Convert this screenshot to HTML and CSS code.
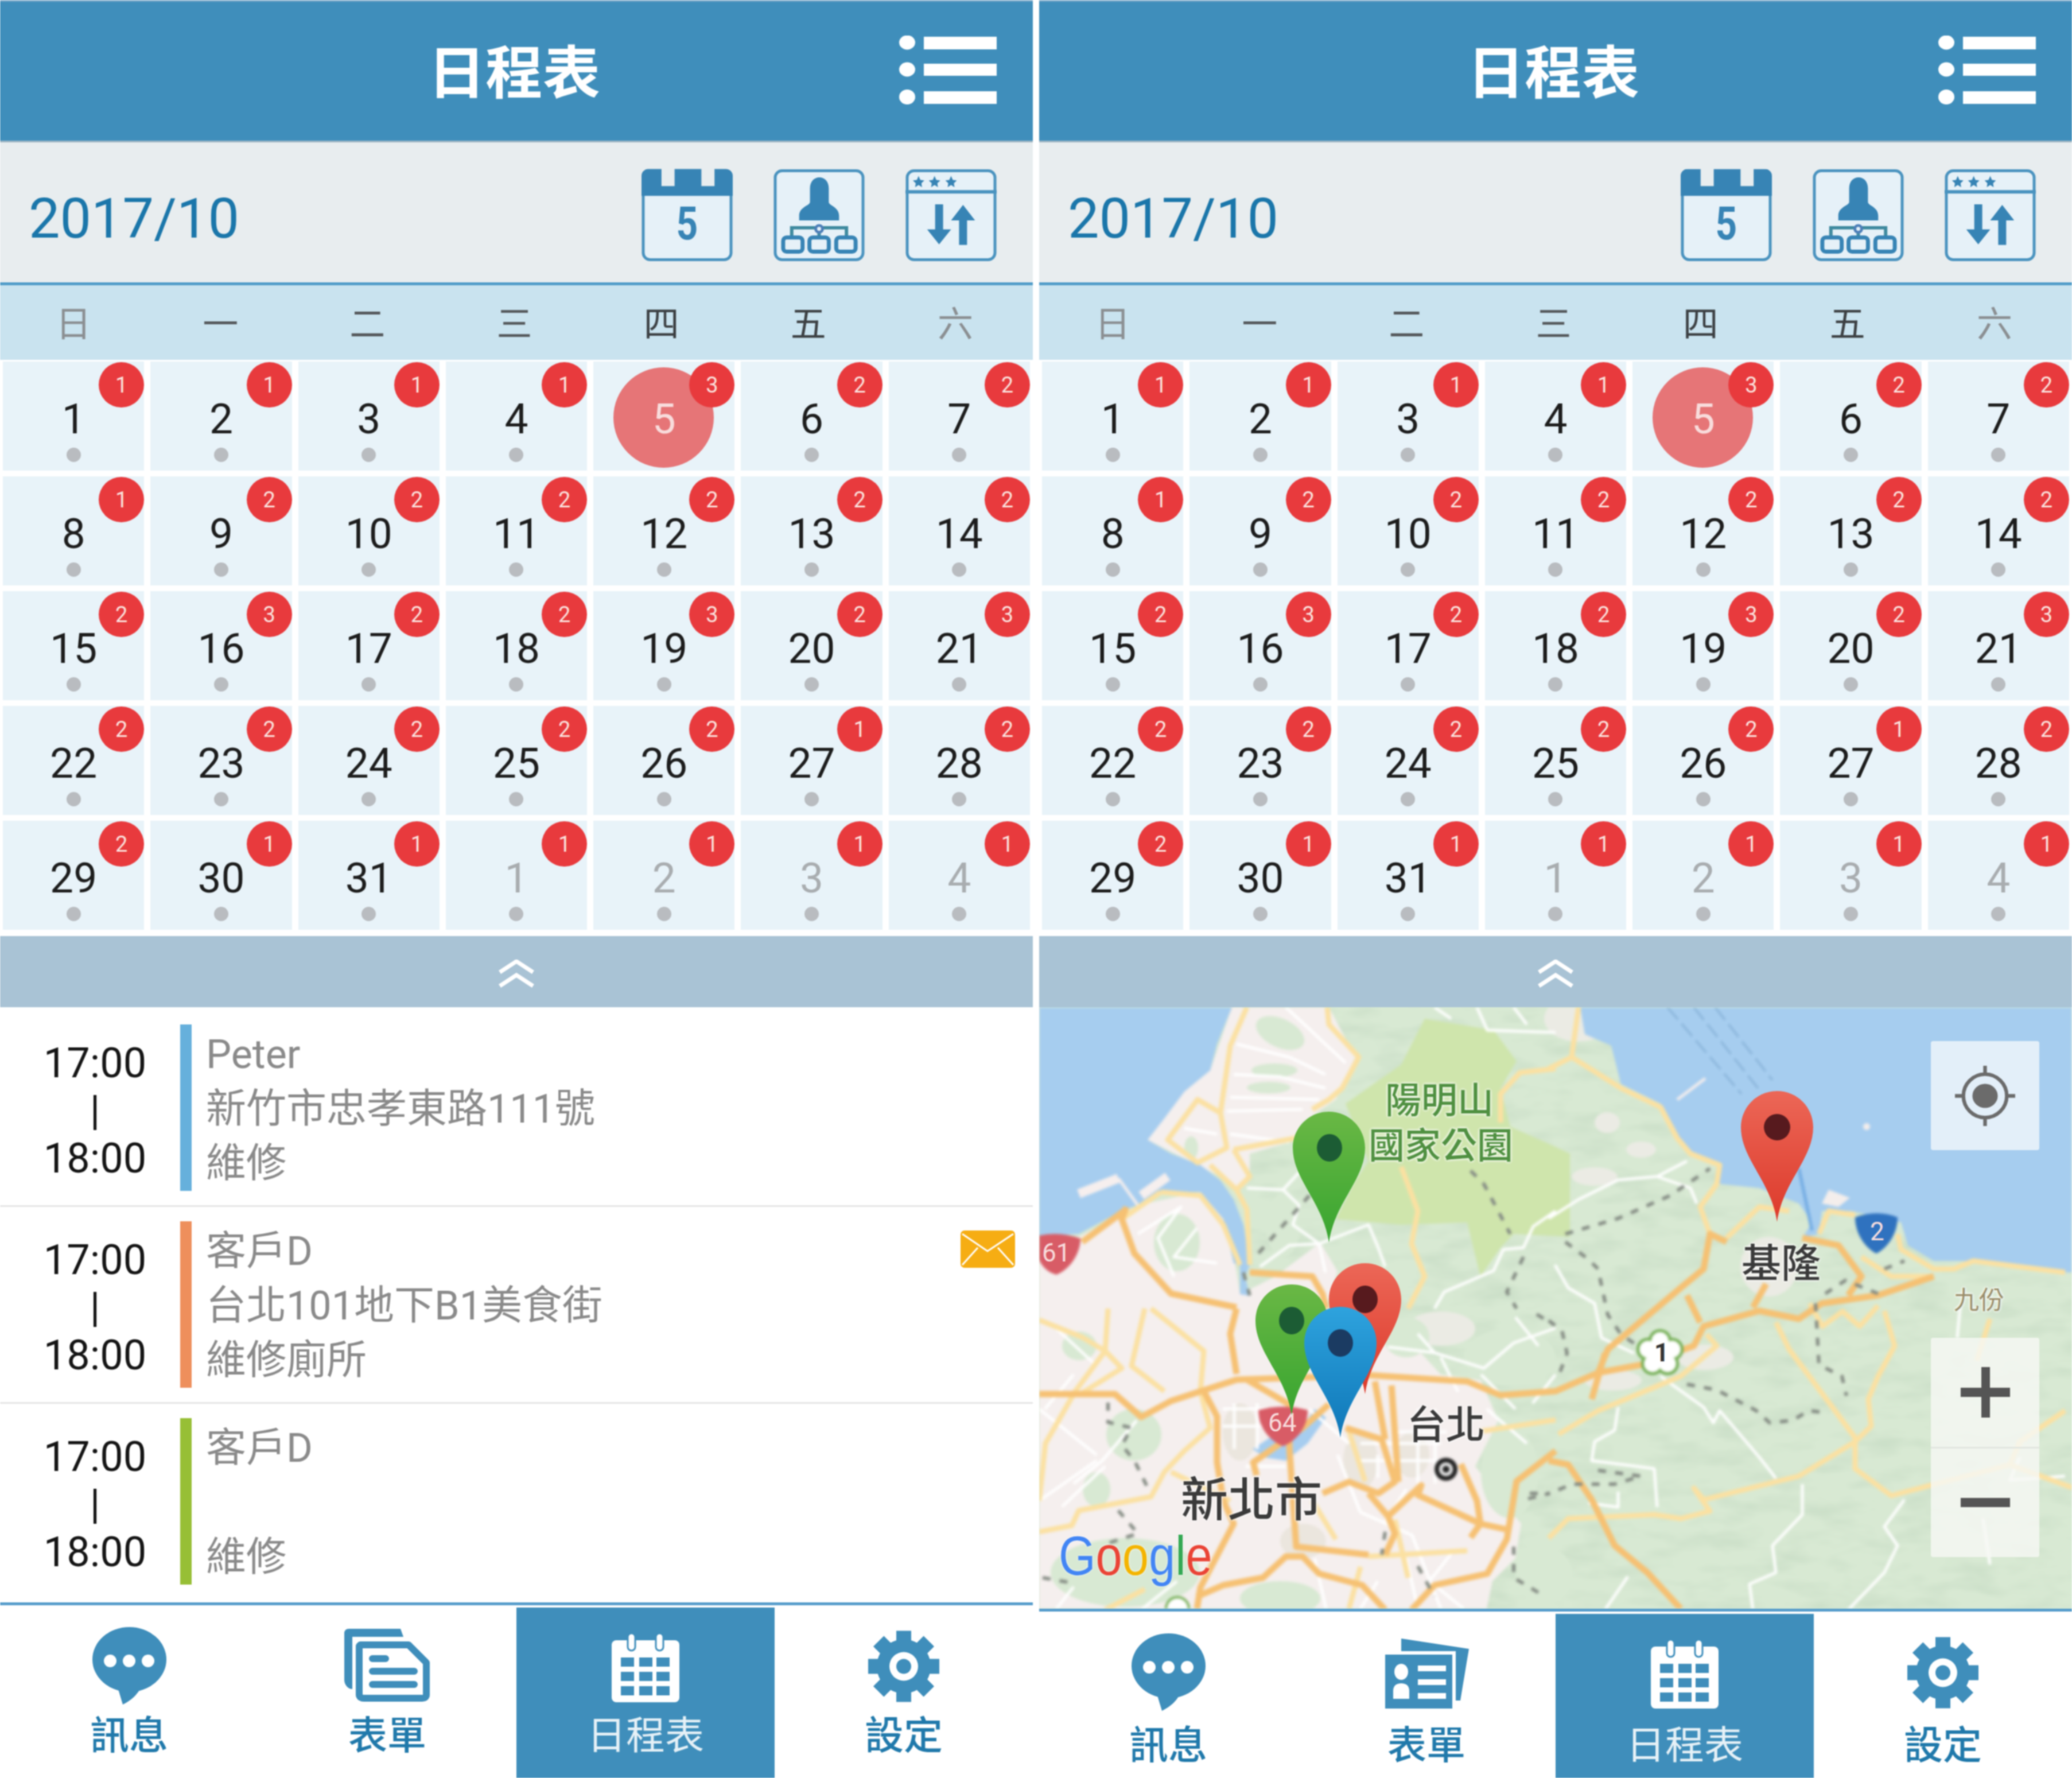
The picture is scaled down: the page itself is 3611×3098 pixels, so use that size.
FILE: index.html
```html
<!DOCTYPE html>
<html lang="zh-Hant">
<head>
    <meta charset="UTF-8">
    <title>日程表</title>
    <link rel="stylesheet" href="styles.css">
</head>
<body>
    <!-- shared icons -->
    <svg class="defs">
        <symbol id="ico-menu" viewBox="0 0 170 120">
            <ellipse cx="14" cy="12" rx="14" ry="12.5" fill="#fff"/><ellipse cx="14" cy="59" rx="14" ry="12.5" fill="#fff"/><ellipse cx="14" cy="107" rx="14" ry="13" fill="#fff"/>
            <rect x="43" y="2" width="127" height="22" fill="#fff"/><rect x="43" y="49" width="127" height="21" fill="#fff"/><rect x="43" y="97" width="127" height="22" fill="#fff"/>
        </symbol>
        <symbol id="ico-day" viewBox="0 0 160 162">
            <path d="M3 40V147a12 12 0 0 0 12 12H145a12 12 0 0 0 12-12V40z" fill="#e6f1f8" stroke="#4a93bf" stroke-width="5"/>
            <path d="M12 0h23v30h23V0h47v30h23V0h20a12 12 0 0 1 12 12v35H0V12A12 12 0 0 1 12 0z" fill="#3784b5"/>
            <text x="80" y="123" class="ico-five" textLength="38" lengthAdjust="spacingAndGlyphs">5</text>
        </symbol>
        <symbol id="ico-org" viewBox="0 0 160 162">
            <rect x="3" y="3" width="154" height="156" rx="12" fill="#e6f1f8" stroke="#4a93bf" stroke-width="5"/>
            <path d="M64 34C64 8 97 8 97 34V58C97 64 115 66 115 82V90H45V82C45 66 64 64 64 58z" fill="#3784b5"/>
            <path d="M32 118V103H128V118M80 103V118" fill="none" stroke="#3f8a9f" stroke-width="6"/>
            <circle cx="80" cy="105" r="6" fill="#e6f1f8" stroke="#4d7fb8" stroke-width="5"/>
            <rect x="17" y="120" width="34" height="25" rx="6" fill="#e6f1f8" stroke="#3784b5" stroke-width="7"/>
            <rect x="63" y="120" width="34" height="25" rx="6" fill="#e6f1f8" stroke="#3784b5" stroke-width="7"/>
            <rect x="110" y="120" width="34" height="25" rx="6" fill="#e6f1f8" stroke="#3784b5" stroke-width="7"/>
        </symbol>
        <symbol id="ico-sort" viewBox="0 0 160 162">
            <rect x="3" y="3" width="154" height="156" rx="12" fill="#e6f1f8" stroke="#4a93bf" stroke-width="5"/>
            <path d="M0 40H160" stroke="#4a93bf" stroke-width="6"/>
            <path d="M23 12l3 7 7 1-5 5 1 7-6-4-6 4 1-7-5-5 7-1z" fill="#3784b5"/>
            <path d="M51 12l3 7 7 1-5 5 1 7-6-4-6 4 1-7-5-5 7-1z" fill="#3784b5"/>
            <path d="M80 12l3 7 7 1-5 5 1 7-6-4-6 4 1-7-5-5 7-1z" fill="#3784b5"/>
            <path d="M52 62H66V106H80L59 132 38 106H52z" fill="#3784b5"/>
            <path d="M94 133H108V90H122L101 63 80 90H94z" fill="#3784b5"/>
        </symbol>
        <symbol id="ico-up" viewBox="0 0 62 50">
            <path d="M2 22L31 3 60 22M2 46L31 27 60 46" fill="none" stroke="#fff" stroke-width="7"/>
        </symbol>
        <symbol id="ico-chat" viewBox="0 0 150 140">
            <ellipse cx="75.5" cy="56.5" rx="64.5" ry="56.5" fill="#3f8ebb"/>
            <path d="M55 105L64 135C78 128 90 118 96 104z" fill="#3f8ebb"/>
            <circle cx="42" cy="59" r="11" fill="#fff"/><circle cx="75" cy="59" r="11" fill="#fff"/><circle cx="108" cy="59" r="11" fill="#fff"/>
        </symbol>
        <symbol id="ico-form" viewBox="0 0 150 140">
            <path d="M8 3H98L103 17H14V108C6 108 0 100 0 92V11C0 6 3 3 8 3z" fill="#3f8ebb"/>
            <path d="M28 31H112L143 62V118C143 122 140 124 136 124H34C30 124 26 122 26 118V33z" fill="#fff" stroke="#3f8ebb" stroke-width="12" stroke-linejoin="round"/>
            <path d="M49 55H72M49 77H122M49 100H122" fill="none" stroke="#3f8ebb" stroke-width="12" stroke-linecap="round"/>
        </symbol>
        <symbol id="ico-card" viewBox="0 0 150 140">
            <path d="M31 9L149 27 134 117H31z" fill="#3f8ebb"/>
            <rect x="0" y="34" width="123" height="100" fill="#3f8ebb" stroke="#fff" stroke-width="6"/>
            <ellipse cx="31" cy="67" rx="12" ry="14" fill="#fff"/>
            <path d="M17 114V100C17 90 24 87 31 87S45 90 45 100V114z" fill="#fff"/>
            <path d="M60 61H109M60 85H109M60 109H109" stroke="#fff" stroke-width="10"/>
        </symbol>
        <symbol id="ico-cal" viewBox="0 0 150 140">
            <rect x="16" y="23" width="118" height="108" rx="8" fill="#fff"/>
            <rect x="44" y="11" width="13" height="30" rx="6.5" fill="#fff" stroke="#3f8ebb" stroke-width="3"/>
            <rect x="93" y="11" width="13" height="30" rx="6.5" fill="#fff" stroke="#3f8ebb" stroke-width="3"/>
            <path d="M32 53h23v16H32zM64 53h23v16H64zM94 53h23v16H94zM32 78h23v16H32zM64 78h23v16H64zM94 78h23v16H94zM32 103h23v16H32zM64 103h23v16H64zM94 103h23v16H94z" fill="#3f8ebb"/>
        </symbol>
        <symbol id="ico-gear" viewBox="0 0 150 140">
            <g fill="#3f8ebb" transform="translate(75 68.5)">
                <circle r="47"/>
                <rect x="-13" y="-62" width="26" height="24"/><rect x="-13" y="38" width="26" height="24"/>
                <rect x="-62" y="-13" width="24" height="26"/><rect x="38" y="-13" width="24" height="26"/>
                <rect x="-13" y="-62" width="26" height="24" transform="rotate(45)"/><rect x="-13" y="38" width="26" height="24" transform="rotate(45)"/>
                <rect x="-62" y="-13" width="24" height="26" transform="rotate(45)"/><rect x="38" y="-13" width="24" height="26" transform="rotate(45)"/>
                <circle r="25" fill="#fff"/><circle r="13"/>
            </g>
        </symbol>
        <symbol id="ico-mail" viewBox="0 0 95 65">
            <rect width="95" height="65" rx="7" fill="#f6ad13"/>
            <path d="M3 6L47 36 92 6M3 60L30 30M92 60L65 30" fill="none" stroke="#fff" stroke-width="3"/>
        </symbol>
    </svg>

    <main class="screens">
        <!-- left: event list -->
        <section class="phone">
            <header class="topbar">
                <span></span>
                <h1 class="title">日程表</h1>
                <svg class="menu"><use href="#ico-menu"/></svg>
            </header>
            <div class="monthbar">
                <span class="month">2017/10</span>
                <div class="tools">
                    <svg class="tool"><use href="#ico-day"/></svg>
                    <svg class="tool"><use href="#ico-org"/></svg>
                    <svg class="tool"><use href="#ico-sort"/></svg>
                </div>
            </div>
            <div class="weekdays">
                <span class="wd-end">日</span><span>一</span><span>二</span><span>三</span><span class="wd-mid">四</span><span class="wd-mid">五</span><span class="wd-end">六</span>
            </div>
            <div class="days">
                <div class="day"><b class="badge">1</b><span class="num">1</span><i class="dot"></i></div>
                <div class="day"><b class="badge">1</b><span class="num">2</span><i class="dot"></i></div>
                <div class="day"><b class="badge">1</b><span class="num">3</span><i class="dot"></i></div>
                <div class="day"><b class="badge">1</b><span class="num">4</span><i class="dot"></i></div>
                <div class="day today"><b class="badge">3</b><span class="num">5</span><i class="dot"></i></div>
                <div class="day"><b class="badge">2</b><span class="num">6</span><i class="dot"></i></div>
                <div class="day"><b class="badge">2</b><span class="num">7</span><i class="dot"></i></div>
                <div class="day"><b class="badge">1</b><span class="num">8</span><i class="dot"></i></div>
                <div class="day"><b class="badge">2</b><span class="num">9</span><i class="dot"></i></div>
                <div class="day"><b class="badge">2</b><span class="num">10</span><i class="dot"></i></div>
                <div class="day"><b class="badge">2</b><span class="num">11</span><i class="dot"></i></div>
                <div class="day"><b class="badge">2</b><span class="num">12</span><i class="dot"></i></div>
                <div class="day"><b class="badge">2</b><span class="num">13</span><i class="dot"></i></div>
                <div class="day"><b class="badge">2</b><span class="num">14</span><i class="dot"></i></div>
                <div class="day"><b class="badge">2</b><span class="num">15</span><i class="dot"></i></div>
                <div class="day"><b class="badge">3</b><span class="num">16</span><i class="dot"></i></div>
                <div class="day"><b class="badge">2</b><span class="num">17</span><i class="dot"></i></div>
                <div class="day"><b class="badge">2</b><span class="num">18</span><i class="dot"></i></div>
                <div class="day"><b class="badge">3</b><span class="num">19</span><i class="dot"></i></div>
                <div class="day"><b class="badge">2</b><span class="num">20</span><i class="dot"></i></div>
                <div class="day"><b class="badge">3</b><span class="num">21</span><i class="dot"></i></div>
                <div class="day"><b class="badge">2</b><span class="num">22</span><i class="dot"></i></div>
                <div class="day"><b class="badge">2</b><span class="num">23</span><i class="dot"></i></div>
                <div class="day"><b class="badge">2</b><span class="num">24</span><i class="dot"></i></div>
                <div class="day"><b class="badge">2</b><span class="num">25</span><i class="dot"></i></div>
                <div class="day"><b class="badge">2</b><span class="num">26</span><i class="dot"></i></div>
                <div class="day"><b class="badge">1</b><span class="num">27</span><i class="dot"></i></div>
                <div class="day"><b class="badge">2</b><span class="num">28</span><i class="dot"></i></div>
                <div class="day"><b class="badge">2</b><span class="num">29</span><i class="dot"></i></div>
                <div class="day"><b class="badge">1</b><span class="num">30</span><i class="dot"></i></div>
                <div class="day"><b class="badge">1</b><span class="num">31</span><i class="dot"></i></div>
                <div class="day other"><b class="badge">1</b><span class="num">1</span><i class="dot"></i></div>
                <div class="day other"><b class="badge">1</b><span class="num">2</span><i class="dot"></i></div>
                <div class="day other"><b class="badge">1</b><span class="num">3</span><i class="dot"></i></div>
                <div class="day other"><b class="badge">1</b><span class="num">4</span><i class="dot"></i></div>
            </div>
            <div class="collapse"><svg class="collapse-ico"><use href="#ico-up"/></svg></div>
            <div class="events">
                <article class="event">
                    <div class="time">17:00<br>|<br>18:00</div>
                    <i class="stripe stripe-blue"></i>
                    <div class="info">Peter<br>新竹市忠孝東路111號<br>維修</div>
                </article>
                <article class="event">
                    <div class="time">17:00<br>|<br>18:00</div>
                    <i class="stripe stripe-orange"></i>
                    <div class="info">客戶D<br>台北101地下B1美食街<br>維修廁所</div>
                    <svg class="mail"><use href="#ico-mail"/></svg>
                </article>
                <article class="event last">
                    <div class="time">17:00<br>|<br>18:00</div>
                    <i class="stripe stripe-green"></i>
                    <div class="info">客戶D<br>&nbsp;<br>維修</div>
                </article>
            </div>
            <nav class="tabs">
                <a class="tab"><svg class="tab-ico"><use href="#ico-chat"/></svg>訊息</a>
                <a class="tab"><svg class="tab-ico"><use href="#ico-form"/></svg>表單</a>
                <a class="tab active"><svg class="tab-ico"><use href="#ico-cal"/></svg>日程表</a>
                <a class="tab"><svg class="tab-ico"><use href="#ico-gear"/></svg>設定</a>
            </nav>
        </section>

        <!-- right: map -->
        <section class="phone">
            <header class="topbar">
                <span></span>
                <h1 class="title">日程表</h1>
                <svg class="menu"><use href="#ico-menu"/></svg>
            </header>
            <div class="monthbar">
                <span class="month">2017/10</span>
                <div class="tools">
                    <svg class="tool"><use href="#ico-day"/></svg>
                    <svg class="tool"><use href="#ico-org"/></svg>
                    <svg class="tool"><use href="#ico-sort"/></svg>
                </div>
            </div>
            <div class="weekdays">
                <span class="wd-end">日</span><span>一</span><span>二</span><span>三</span><span class="wd-mid">四</span><span class="wd-mid">五</span><span class="wd-end">六</span>
            </div>
            <div class="days">
                <div class="day"><b class="badge">1</b><span class="num">1</span><i class="dot"></i></div>
                <div class="day"><b class="badge">1</b><span class="num">2</span><i class="dot"></i></div>
                <div class="day"><b class="badge">1</b><span class="num">3</span><i class="dot"></i></div>
                <div class="day"><b class="badge">1</b><span class="num">4</span><i class="dot"></i></div>
                <div class="day today"><b class="badge">3</b><span class="num">5</span><i class="dot"></i></div>
                <div class="day"><b class="badge">2</b><span class="num">6</span><i class="dot"></i></div>
                <div class="day"><b class="badge">2</b><span class="num">7</span><i class="dot"></i></div>
                <div class="day"><b class="badge">1</b><span class="num">8</span><i class="dot"></i></div>
                <div class="day"><b class="badge">2</b><span class="num">9</span><i class="dot"></i></div>
                <div class="day"><b class="badge">2</b><span class="num">10</span><i class="dot"></i></div>
                <div class="day"><b class="badge">2</b><span class="num">11</span><i class="dot"></i></div>
                <div class="day"><b class="badge">2</b><span class="num">12</span><i class="dot"></i></div>
                <div class="day"><b class="badge">2</b><span class="num">13</span><i class="dot"></i></div>
                <div class="day"><b class="badge">2</b><span class="num">14</span><i class="dot"></i></div>
                <div class="day"><b class="badge">2</b><span class="num">15</span><i class="dot"></i></div>
                <div class="day"><b class="badge">3</b><span class="num">16</span><i class="dot"></i></div>
                <div class="day"><b class="badge">2</b><span class="num">17</span><i class="dot"></i></div>
                <div class="day"><b class="badge">2</b><span class="num">18</span><i class="dot"></i></div>
                <div class="day"><b class="badge">3</b><span class="num">19</span><i class="dot"></i></div>
                <div class="day"><b class="badge">2</b><span class="num">20</span><i class="dot"></i></div>
                <div class="day"><b class="badge">3</b><span class="num">21</span><i class="dot"></i></div>
                <div class="day"><b class="badge">2</b><span class="num">22</span><i class="dot"></i></div>
                <div class="day"><b class="badge">2</b><span class="num">23</span><i class="dot"></i></div>
                <div class="day"><b class="badge">2</b><span class="num">24</span><i class="dot"></i></div>
                <div class="day"><b class="badge">2</b><span class="num">25</span><i class="dot"></i></div>
                <div class="day"><b class="badge">2</b><span class="num">26</span><i class="dot"></i></div>
                <div class="day"><b class="badge">1</b><span class="num">27</span><i class="dot"></i></div>
                <div class="day"><b class="badge">2</b><span class="num">28</span><i class="dot"></i></div>
                <div class="day"><b class="badge">2</b><span class="num">29</span><i class="dot"></i></div>
                <div class="day"><b class="badge">1</b><span class="num">30</span><i class="dot"></i></div>
                <div class="day"><b class="badge">1</b><span class="num">31</span><i class="dot"></i></div>
                <div class="day other"><b class="badge">1</b><span class="num">1</span><i class="dot"></i></div>
                <div class="day other"><b class="badge">1</b><span class="num">2</span><i class="dot"></i></div>
                <div class="day other"><b class="badge">1</b><span class="num">3</span><i class="dot"></i></div>
                <div class="day other"><b class="badge">1</b><span class="num">4</span><i class="dot"></i></div>
            </div>
            <div class="collapse"><svg class="collapse-ico"><use href="#ico-up"/></svg></div>
            <div class="map">
                <svg class="map-base" viewBox="0 0 1800 1048">
                    <defs>
                        <filter id="terrain" x="0" y="0" width="100%" height="100%">
                            <feTurbulence type="fractalNoise" baseFrequency="0.012 0.035" numOctaves="3" seed="7"/>
                            <feColorMatrix values="0 0 0 0 0.6  0 0 0 0 0.74  0 0 0 0 0.58  0 0 0 2.2 -0.95"/>
                        </filter>
                    </defs>
                    <rect width="1800" height="1048" fill="#d8e9d3"/>
                    <rect width="1800" height="1048" filter="url(#terrain)"/>
                    <!-- pale patches in the hills -->
                    <g fill="#ebebe4">
                        <ellipse cx="1049" cy="248" rx="26" ry="14"/><ellipse cx="968" cy="295" rx="40" ry="16"/><ellipse cx="990" cy="201" rx="22" ry="18"/>
                        <ellipse cx="940" cy="20" rx="60" ry="40"/><ellipse cx="1272" cy="452" rx="50" ry="52"/><ellipse cx="1160" cy="610" rx="50" ry="22"/>
                        <ellipse cx="700" cy="560" rx="60" ry="30"/><ellipse cx="1000" cy="650" rx="50" ry="18"/>
                    </g>
                    <!-- park -->
                    <path d="M672 20L792 40 832 94 804 141 821 208 895 241 925 255 925 400 827 395 804 419 769 469 746 375 631 379 517 369 551 302 574 268 534 168 631 100z" fill="#cfe5ac"/>
                    <!-- town areas -->
                    <g fill="#f5efee">
                        <path d="M336 0L505 0 551 87 517 161 459 201 442 234 367 255 367 302 350 318 316 295 189 231 253 147 298 110z"/>
                        <path d="M0 400L70 400 172 345 280 322 330 370 350 500 410 470 490 410 520 460 500 525 560 540 640 575 700 640 770 650 800 720 760 800 840 900 830 960 790 1000 780 1048H0z"/>
                    </g>
                    <g fill="#d8e9d3">
                        <ellipse cx="420" cy="45" rx="45" ry="25" transform="rotate(25 420 45)"/><ellipse cx="410" cy="110" rx="40" ry="12"/><ellipse cx="400" cy="140" rx="38" ry="10"/>
                        <ellipse cx="265" cy="245" rx="12" ry="20"/><ellipse cx="240" cy="410" rx="40" ry="50"/><ellipse cx="425" cy="380" rx="30" ry="55"/>
                        <ellipse cx="165" cy="745" rx="48" ry="45"/><ellipse cx="100" cy="840" rx="24" ry="30"/><ellipse cx="150" cy="985" rx="130" ry="60"/>
                        <ellipse cx="640" cy="575" rx="40" ry="35"/><ellipse cx="820" cy="610" rx="80" ry="50"/><ellipse cx="820" cy="810" rx="50" ry="80"/>
                        <ellipse cx="420" cy="1030" rx="70" ry="30"/><ellipse cx="880" cy="990" rx="50" ry="50"/><ellipse cx="70" cy="590" rx="30" ry="25"/>
                    </g>
                    <g fill="#ebe6de">
                        <ellipse cx="350" cy="740" rx="30" ry="50"/><ellipse cx="560" cy="790" rx="30" ry="50"/><ellipse cx="460" cy="930" rx="40" ry="30"/><ellipse cx="650" cy="780" rx="30" ry="40"/>
                    </g>
                    <!-- water -->
                    <g fill="#a6cdef">
                        <path d="M943 0L951 47 997 67 1014 134 1083 168 1112 221 1129 248 1186 275 1186 308 1255 315 1324 342 1347 375 1330 402 1359 395 1364 355 1416 355 1502 375 1514 415 1559 442 1628 442 1788 462 1800 462V0z"/>
                        <path d="M0 0H336L310 64 298 110 253 147 218 194 189 231 230 255 281 275 316 302 339 335 356 379 367 449 359 469 367 503 350 500 350 449 339 446 321 369 281 322 212 322 172 345 149 352 69 395 0 399z"/>
                        <path d="M372 770L420 738 452 740 480 700 500 715 468 760 430 790 395 785z"/>
                    </g>
                    <g fill="none" stroke="#f6efee">
                        <path d="M69 325L138 298M178 328L224 295" stroke-width="16"/>
                        <path d="M138 298L172 345M1112 161L1161 124" stroke-width="5"/>
                    </g>
                    <path d="M1364 342L1376 318 1413 332 1393 348z" fill="#f4eeec"/>
                    <circle cx="1442" cy="208" r="6" fill="#f4eeec"/>
                    <path d="M1095 0L1224 151M1141 0L1255 144M1178 0L1278 127" fill="none" stroke="#8db7dc" stroke-width="4" stroke-dasharray="28 10"/>
                    <path d="M1324 281L1347 389" stroke="#77aee4" stroke-width="6"/>
                    <!-- small roads -->
                    <g fill="none" stroke="#fff" stroke-width="5" stroke-linejoin="round">
                        <path d="M344 64L436 87 499 117M339 117L419 121 499 141M333 157L488 161M327 181L459 178M333 221L436 235M253 211L310 221M430 0L534 97"/>
                        <path d="M362 315L425 318 453 288M425 318L453 345 442 379 488 412 574 379 591 419 603 452M385 452L436 415 488 412 499 462"/>
                        <path d="M172 395L247 348 207 402 235 469M275 385L235 435 310 446M689 525L706 496 792 459 809 422 844 419 861 382 900 355"/>
                        <path d="M763 0L781 40 900 44M689 0L718 20M827 0L850 30"/>
                        <path d="M0 700L100 780M60 830L110 790 170 720M115 800L40 870M0 860L100 790M30 560L95 620M60 640L10 700"/>
                        <path d="M608 592L689 602 775 629 827 585 900 559M689 602L660 569M770 640L830 700M700 610L730 670"/>
                        <path d="M320 700H430M320 730H430M340 690V770M380 690V770M360 800H430M470 700L540 760"/>
                        <path d="M560 760H700M560 790H700M620 740H710M660 700V830M690 700V830M590 780V820M520 780L560 880M640 840L600 900"/>
                        <path d="M560 880L650 920 700 1048M480 960L500 1048M640 960L660 1048M590 1000L560 1048M720 950L680 1000 740 1048M240 1000L180 1048M60 1010L30 1048"/>
                        <path d="M888 368L940 335 1009 301 1077 295 1129 268M1077 295L1135 315 1146 342"/>
                        <path d="M899 449L922 489 968 516 980 576 1037 603"/>
                        <path d="M1083 643L1158 697 1175 724 1186 703 1215 737 1232 757 1255 784 1284 821"/>
                        <path d="M1330 831L1330 884 1278 938 1284 985 1238 1005 1244 1050M1508 858L1473 905 1496 938 1473 985 1410 1050M1026 992L986 1050"/>
                        <path d="M1009 697L1003 737 968 757 963 790 1072 804 1077 871M1009 844L1009 871 957 864M1605 523L1600 576M1709 784L1692 824 1788 817M1645 891L1657 971"/>
                        <path d="M830 540L870 590M860 690L900 640M780 700L850 760"/>
                    </g>
                    <!-- yellow roads -->
                    <g fill="none" stroke="#fbe1a2" stroke-width="9" stroke-linejoin="round">
                        <path d="M362 0L333 67 316 184 327 245 276 271 224 231 276 161 316 184M339 248L448 228M339 248L367 295 344 318 298 275M344 318L362 352 367 449"/>
                        <path d="M502 0L505 30 557 87 528 141 505 161 476 178M212 322L281 328 321 379 350 449M144 369L212 322"/>
                        <path d="M631 278L660 355 649 412 672 469 643 525M900 107L838 114 804 151 804 201"/>
                        <path d="M940 0L928 87 1014 141 1083 174 1112 228 1135 255 1186 275 1181 308 1152 348 1169 395M888 107L928 87"/>
                        <path d="M1198 402L1255 348 1307 355M1359 395L1376 355 1422 362M1496 395L1502 422 1559 456 1594 456 1628 442 1788 462M1433 435L1485 469 1559 469"/>
                        <path d="M1473 529L1491 590 1462 643 1445 683 1450 730 1422 757 1324 817 1158 858 1141 838 1169 878 1118 891 1072 884 922 891 888 925"/>
                        <path d="M1284 549L1307 596 1422 750 1422 804 1485 851 1692 797 1800 837M1163 570L1181 590 1118 643 974 703 905 744M1788 703L1709 757 1692 797M1657 543L1634 616"/>
                        <path d="M1343 516L1365 556 1400 530 1430 556 1462 520"/>
                        <path d="M0 545L75 575 115 599 144 629 75 672M120 525L115 599 63 669 11 760 0 860M184 525L161 625 218 669"/>
                        <path d="M195 525L287 599 281 669 298 733 253 773 218 810 195 853 69 877 57 903 0 914"/>
                        <path d="M574 957L746 947M620 893L643 994M184 1014L115 1050M540 739L568 826M476 860L517 927M230 810L333 860M769 739L900 719M560 975L540 1048"/>
                    </g>
                    <!-- highways -->
                    <g fill="none" stroke="#f6c173" stroke-width="11" stroke-linejoin="round">
                        <path d="M0 674L132 674 178 714 230 686 344 649 574 641 746 652 804 676 900 669 974 637 1049 623 1141 590 1158 556 1255 529 1324 543 1364 516 1462 502 1559 469"/>
                        <path d="M974 637L991 596 1118 489 1158 456 1169 395 1198 409M1129 502L1152 549M963 683L986 603"/>
                        <path d="M1330 402L1393 415 1433 469 1410 502M1267 482L1244 523M888 790L922 797 963 858 1003 938 1060 985 1118 1048"/>
                        <path d="M287 669L310 713 310 793 321 860 339 900 281 1011 275 1048M344 525L333 569 344 639"/>
                        <path d="M362 649L436 692 436 766 448 940 574 954M505 692L459 733 373 793 379 816"/>
                        <path d="M534 733L597 753 620 827 591 847 540 827 494 847M585 652L603 753M614 659L626 827"/>
                        <path d="M574 847L608 887 666 833 660 850 769 900 815 910M608 887L620 917 603 954M735 796L763 860 769 900 752 924"/>
                        <path d="M900 773L832 826 815 927 781 987 689 1007 649 1050M275 1027L321 1007 390 994 430 957 459 957 488 987 563 1007 603 1050"/>
                        <path d="M152 348L144 369 166 429 230 499 344 523M75 409L152 352M367 462L476 469 494 500 500 525"/>
                    </g>
                    <!-- trails -->
                    <g fill="none" stroke="#858c84" stroke-width="6" stroke-dasharray="14 16">
                        <path d="M471 328L373 439M752 285L775 308 821 395M844 435L815 496 832 525M356 462L367 502"/>
                        <path d="M917 395L1009 368 1100 328 1169 281M917 409L957 439 974 456 991 536 1014 570 1043 590M888 546L911 563 920 603 905 643"/>
                        <path d="M1353 516L1359 623 1399 643 1407 677M1370 499L1405 476 1462 499M1473 456L1508 442"/>
                        <path d="M1129 657L1181 667 1250 703 1273 724 1313 720 1341 703 1376 707M974 807L1049 817 1003 831 928 831 888 848"/>
                        <path d="M120 689L120 723 161 733 144 763 166 790 189 837M138 877L172 917 120 934M6 994L63 1004"/>
                        <path d="M827 940L827 994 872 1021M855 847L890 847 838 860M603 914L597 954M660 974L689 1027M867 535L895 552"/>
                    </g>
                    <!-- route shields -->
                    <path d="M0 398Q35 390 72 403C72 430 52 458 30 466 15 462 5 452 0 440z" fill="#d85c66"/>
                    <path d="M382 702Q425 690 468 702C468 735 445 757 425 765 405 757 382 735 382 702z" fill="#d85c66"/>
                    <path d="M1422 366Q1460 352 1496 366C1496 395 1478 420 1459 429 1440 420 1422 395 1422 366z" fill="#2f72bf"/>
                    <g fill="#72ad52"><circle cx="1082" cy="581" r="20"/><circle cx="1061" cy="596" r="20"/><circle cx="1103" cy="596" r="20"/><circle cx="1069" cy="621" r="20"/><circle cx="1095" cy="621" r="20"/></g>
                    <g fill="#fff"><circle cx="1082" cy="581" r="15"/><circle cx="1061" cy="596" r="15"/><circle cx="1103" cy="596" r="15"/><circle cx="1069" cy="621" r="15"/><circle cx="1095" cy="621" r="15"/><circle cx="1082" cy="603" r="22"/></g>
                    <circle cx="241" cy="1048" r="20" fill="#fff" stroke="#72ad52" stroke-width="4"/>
                    <circle cx="709" cy="805" r="20" fill="#222"/><circle cx="709" cy="805" r="12" fill="#e8e8e8"/><circle cx="709" cy="805" r="6" fill="#222"/>
                </svg>

                <span class="place place-yms">陽明山</span>
                <span class="place place-park">國家公園</span>
                <span class="place place-keelung">基隆</span>
                <span class="place place-jiufen">九份</span>
                <span class="place place-taipei">台北</span>
                <span class="place place-newtpe">新北市</span>
                <span class="shield shield-61">61</span>
                <span class="shield shield-64">64</span>
                <span class="shield shield-2">2</span>
                <span class="shield shield-1">1</span>
                <span class="google"><b class="g-b">G</b><b class="g-r">o</b><b class="g-y">o</b><b class="g-b">g</b><b class="g-g">l</b><b class="g-r">e</b></span>

                <svg class="map-pins" viewBox="0 0 1800 1048">
                    <defs>
                        <path id="pin-shape" d="M0 165C-10 95-63 55-63 0-63-35-35-63 0-63S63-35 63 0C63 55 10 95 0 165z"/>
                        <linearGradient id="pin-green" x1="0" y1="0" x2="0" y2="1"><stop offset="0" stop-color="#6ab845"/><stop offset="1" stop-color="#38a530"/></linearGradient>
                        <linearGradient id="pin-red" x1="0" y1="0" x2="0" y2="1"><stop offset="0" stop-color="#ec6757"/><stop offset="1" stop-color="#dd3a2b"/></linearGradient>
                        <linearGradient id="pin-blue" x1="0" y1="0" x2="0" y2="1"><stop offset="0" stop-color="#2ea3de"/><stop offset="1" stop-color="#0f77b8"/></linearGradient>
                    </defs>
                    <use href="#pin-shape" x="505" y="245" fill="url(#pin-green)"/><ellipse cx="506" cy="245" rx="22" ry="24" fill="#1c5c34"/>
                    <use href="#pin-shape" x="1286" y="209" fill="url(#pin-red)"/><ellipse cx="1286" cy="209" rx="23" ry="23" fill="#571a1e"/>
                    <use href="#pin-shape" x="568" y="509" fill="url(#pin-red)"/><ellipse cx="568" cy="509" rx="22" ry="24" fill="#571a1e"/>
                    <use href="#pin-shape" x="440" y="546" fill="url(#pin-green)"/><ellipse cx="440" cy="546" rx="22" ry="24" fill="#1c5c34"/>
                    <use href="#pin-shape" x="525" y="585" fill="url(#pin-blue)"/><ellipse cx="525" cy="585" rx="22" ry="24" fill="#1b3b62"/>
                </svg>

                <div class="map-btn locate">
                    <svg class="locate-ico" viewBox="0 0 100 100">
                        <circle cx="50" cy="50" r="36" fill="none" stroke="#6b6b6b" stroke-width="6"/>
                        <ellipse cx="50" cy="50" rx="21" ry="20" fill="#6b6b6b"/>
                        <path d="M50 0V14M50 86V100M0 50H14M86 50H100" stroke="#6b6b6b" stroke-width="6"/>
                    </svg>
                </div>
                <div class="map-btn zoomer">
                    <div class="zoom-part"><i class="plus"></i></div>
                    <div class="zoom-part"><i class="minus"></i></div>
                </div>
            </div>
            <nav class="tabs tabs-map">
                <a class="tab"><svg class="tab-ico"><use href="#ico-chat"/></svg>訊息</a>
                <a class="tab"><svg class="tab-ico"><use href="#ico-card"/></svg>表單</a>
                <a class="tab active"><svg class="tab-ico"><use href="#ico-cal"/></svg>日程表</a>
                <a class="tab"><svg class="tab-ico"><use href="#ico-gear"/></svg>設定</a>
            </nav>
        </section>
    </main>
</body>
</html>
```

FILE: styles.css
```css
body {
    margin: 0;
    background-color: #fff;
    font-family: Roboto, "Noto Sans CJK TC", sans-serif;
}
.defs {
    display: none;
}
.screens {
    display: grid;
    grid-template-columns: 1800px 1800px;
    column-gap: 11px;
    width: 3611px;
    height: 3098px;
    overflow: hidden;
    filter: blur(1px);
}
.phone {
    display: flex;
    flex-direction: column;
    height: 3098px;
    overflow: hidden;
}

/* top */
.topbar {
    display: grid;
    grid-template-columns: 1fr auto 1fr;
    align-items: center;
    box-sizing: border-box;
    height: 248px;
    flex-shrink: 0;
    padding: 0 63px 4px 55px;
    background-color: #3f8ebb;
    border-top: 3px solid #7aa9ca;
    border-bottom: 3px solid #9db5c3;
}
.title {
    margin: 14px 0 0;
    color: #fff;
    font-size: 100px;
    font-weight: 700;
    line-height: 1;
}
.menu {
    justify-self: end;
    width: 170px;
    height: 120px;
}
.monthbar {
    display: flex;
    align-items: center;
    justify-content: space-between;
    box-sizing: border-box;
    height: 249px;
    flex-shrink: 0;
    padding: 10px 63px 0 50px;
    background-color: #e8edef;
    border-bottom: 5px solid #4f9bc8;
}
.month {
    margin-top: 12px;
    color: #1a76aa;
    font-size: 97px;
}
.tools {
    display: flex;
    gap: 71px;
}
.tool {
    width: 159px;
    height: 162px;
}
.ico-five {
    fill: #3784b5;
    font-family: Roboto, sans-serif;
    font-size: 80px;
    font-weight: 700;
    text-anchor: middle;
}

/* calendar */
.weekdays {
    display: grid;
    grid-template-columns: repeat(7, 1fr);
    align-items: center;
    box-sizing: border-box;
    height: 130px;
    flex-shrink: 0;
    padding: 8px 7px 0 0;
    background-color: #c9e3ef;
    color: #55595c;
    font-size: 62px;
    text-align: center;
    line-height: 1;
}
.wd-end {
    color: #8b8f92;
}
.wd-mid {
    color: #3c4043;
}
.days {
    display: grid;
    grid-template-columns: repeat(7, 1fr);
    grid-auto-rows: 190px;
    gap: 10px 11px;
    flex-shrink: 0;
    padding: 3px 5px 11px;
}
.day {
    position: relative;
    display: flex;
    flex-direction: column;
    align-items: center;
    background-color: #e8f3f9;
    color: #1c1c1c;
}
.num {
    position: relative;
    margin-top: 58px;
    font-size: 73px;
    line-height: 84px;
}
.dot {
    width: 25px;
    height: 25px;
    margin-top: 8px;
    border-radius: 50%;
    background-color: #b9bcc0;
}
.badge {
    position: absolute;
    top: 1px;
    right: 0;
    z-index: 2;
    display: flex;
    align-items: center;
    justify-content: center;
    width: 79px;
    height: 79px;
    border-radius: 50%;
    background-color: #e83a3d;
    color: #fbe3df;
    font-size: 38px;
    font-weight: 400;
}
.today .num {
    color: #f8dcdc;
}
.today::before {
    content: "";
    position: absolute;
    top: 10px;
    left: 35px;
    width: 175px;
    height: 175px;
    border-radius: 50%;
    background-color: #e67577;
}
.today .dot {
    visibility: hidden;
}
.other .num {
    color: #a9adb0;
}
.collapse {
    display: flex;
    align-items: center;
    justify-content: center;
    height: 124px;
    flex-shrink: 0;
    background-color: #a9c3d5;
}
.collapse-ico {
    width: 62px;
    height: 50px;
    margin-top: 7px;
}

/* list */
.events {
    box-sizing: border-box;
    height: 1037px;
    flex-shrink: 0;
    padding-top: 5px;
}
.event {
    display: flex;
    align-items: flex-start;
    padding: 25px 0;
    border-bottom: 3px solid #e6e6e6;
}
.event.last {
    border-bottom: 0;
}
.time {
    box-sizing: border-box;
    width: 314px;
    height: 290px;
    padding: 26px 0 0 17px;
    color: #141414;
    font-size: 72px;
    line-height: 83px;
    text-align: center;
}
.stripe {
    width: 20px;
    height: 290px;
    flex-shrink: 0;
}
.stripe-blue {
    background-color: #66b0dc;
}
.stripe-orange {
    background-color: #ee8f5c;
}
.stripe-green {
    background-color: #97bf35;
}
.info {
    padding: 5px 0 0 25px;
    color: #8a8a8a;
    font-size: 70px;
    line-height: 95px;
}
.mail {
    width: 95px;
    height: 65px;
    flex-shrink: 0;
    margin: 16px 31px 0 auto;
}

/* map */
.map {
    position: relative;
    height: 1048px;
    flex-shrink: 0;
    overflow: hidden;
    background-color: #d8e9d3;
}
.map-base {
    display: block;
    width: 100%;
    height: 100%;
    filter: blur(2px);
}
.map-pins {
    position: absolute;
    top: 0;
    left: 0;
    width: 100%;
    height: 100%;
}
.place {
    position: absolute;
    line-height: 1;
    color: #3a3a3a;
    font-weight: 500;
    white-space: nowrap;
    text-shadow: 0 0 5px #fff, 0 0 5px #fff;
}
.place-yms {
    top: 131px;
    left: 603px;
    color: #4f9040;
    font-size: 63px;
}
.place-park {
    top: 210px;
    left: 574px;
    color: #4f9040;
    font-size: 63px;
}
.place-keelung {
    top: 413px;
    left: 1224px;
    font-size: 69px;
}
.place-jiufen {
    top: 489px;
    left: 1594px;
    color: #9a8d6a;
    font-size: 44px;
    font-weight: 400;
}
.place-taipei {
    top: 695px;
    left: 641px;
    font-size: 68px;
}
.place-newtpe {
    top: 818px;
    left: 247px;
    font-size: 82px;
}
.shield {
    position: absolute;
    color: #f8dede;
    font-size: 44px;
    line-height: 1;
}
.shield-61 {
    top: 406px;
    left: 5px;
}
.shield-64 {
    top: 702px;
    left: 399px;
}
.shield-2 {
    top: 369px;
    left: 1448px;
}
.shield-1 {
    top: 580px;
    left: 1072px;
    color: #333;
    font-weight: 700;
}
.google {
    position: absolute;
    top: 908px;
    left: 34px;
    font-family: "Liberation Sans", sans-serif;
    font-size: 96px;
    line-height: 1;
    text-shadow: 0 0 4px #fff;
    transform: scaleX(0.865);
    transform-origin: left center;
}
.google b {
    font-weight: 400;
}
.g-b {
    color: #4285f4;
}
.g-r {
    color: #ea4335;
}
.g-y {
    color: #f4b400;
}
.g-g {
    color: #34a853;
}
.map-btn {
    position: absolute;
    left: 1554px;
    width: 189px;
    border-radius: 4px;
}
.locate {
    top: 59px;
    display: flex;
    align-items: center;
    justify-content: center;
    height: 190px;
    background-color: #e3eff9;
}
.locate-ico {
    width: 105px;
    height: 105px;
}
.zoomer {
    top: 576px;
    display: flex;
    flex-direction: column;
    height: 382px;
    background-color: rgba(246, 248, 244, 0.82);
}
.zoom-part {
    position: relative;
    flex: 1;
}
.zoom-part + .zoom-part {
    border-top: 3px solid #e2e6e0;
}
.plus,
.minus {
    position: absolute;
    top: 50%;
    left: 50%;
    width: 86px;
    height: 16px;
    margin: -8px 0 0 -43px;
    background-color: #555;
}
.plus::after {
    content: "";
    position: absolute;
    top: -36px;
    left: 36px;
    width: 15px;
    height: 88px;
    background-color: #555;
}

/* bottom tabs */
.tabs {
    display: grid;
    grid-template-columns: repeat(4, 1fr);
    box-sizing: border-box;
    height: 306px;
    flex-shrink: 0;
    padding-top: 4px;
    background-color: #fff;
    border-top: 5px solid #559ccb;
}
.tab {
    display: flex;
    flex-direction: column;
    align-items: center;
    padding-top: 34px;
    color: #2079ab;
    font-size: 68px;
    font-weight: 500;
    line-height: 80px;
}
.tab.active {
    background-color: #3f8ebb;
    color: #e6f1f7;
    font-weight: 400;
}
.tab-ico {
    width: 150px;
    height: 140px;
    margin-bottom: 10px;
}
.tabs-map .tab-ico {
    margin-bottom: 16px;
}
```
